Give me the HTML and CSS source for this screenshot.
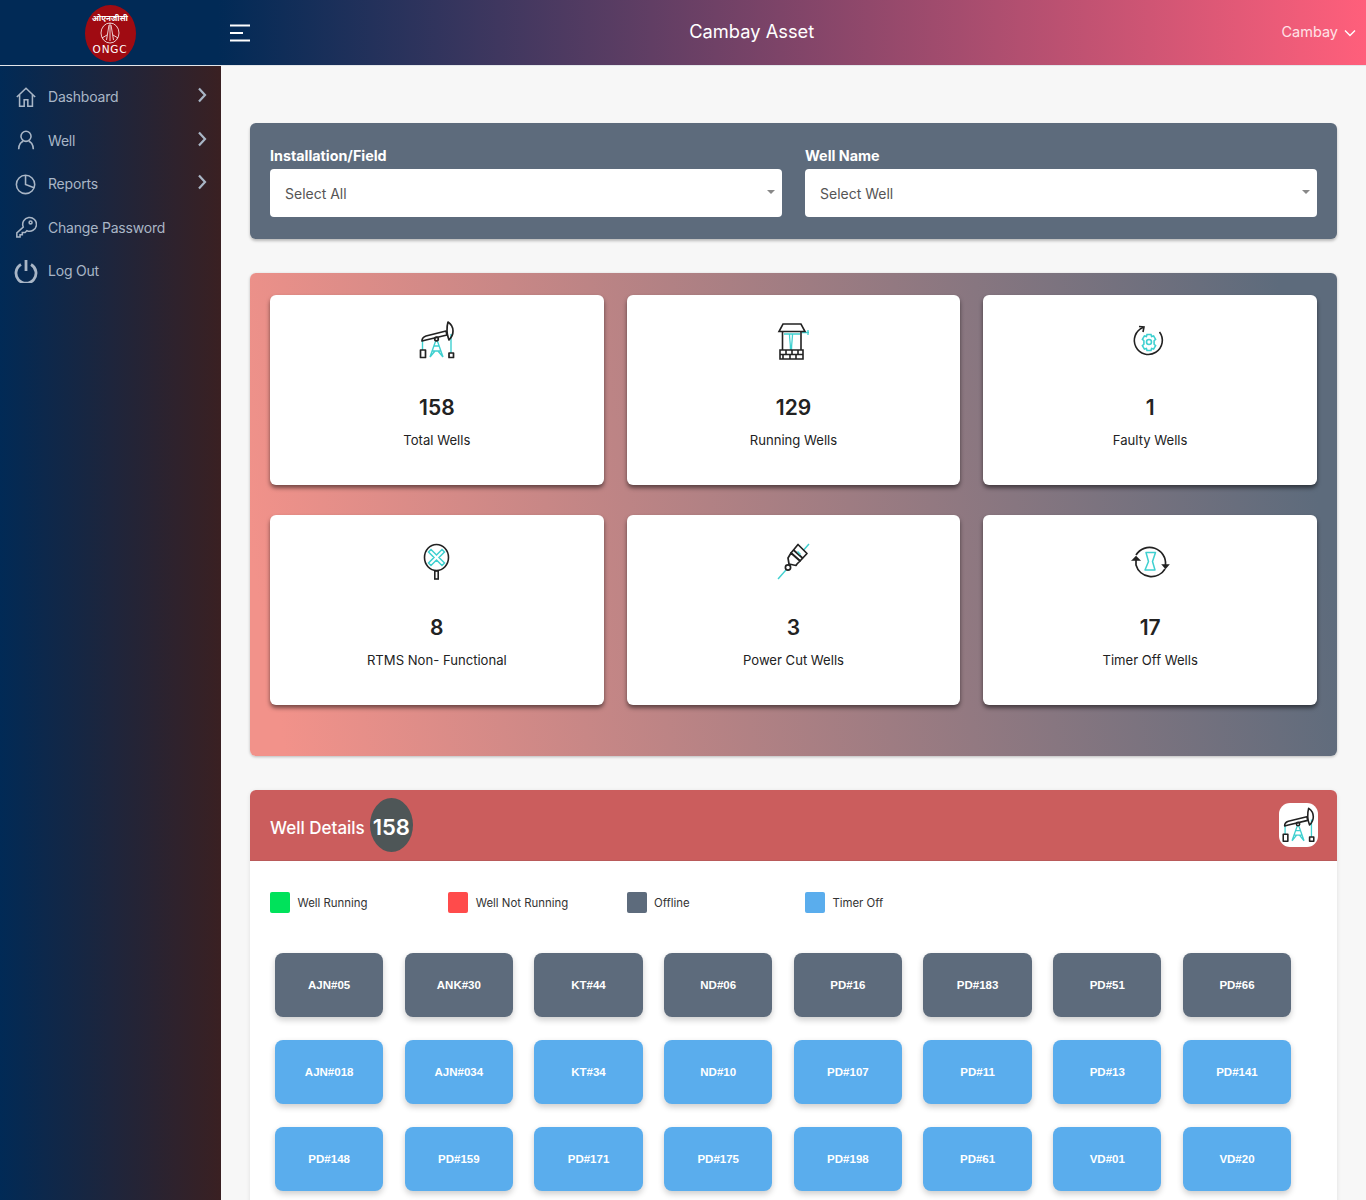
FILE: index.html
```html
<!DOCTYPE html>
<html lang="en">
<head>
<meta charset="utf-8">
<title>Cambay Asset</title>
<link rel="stylesheet" href="styles.css">
</head>
<body>
<svg class="defs" width="0" height="0" aria-hidden="true">
  <symbol id="pump" viewBox="0 0 40 40">
    <g fill="none" stroke="#3fd0d0" stroke-width="1.4">
      <path d="M5.5 20v10M34 14v19M19 20l-6 17M20 20l6 17M15.5 31h8M17 26h5M13 37l5-6 3 0 5 6"/>
    </g>
    <g fill="none" stroke="#222" stroke-width="1.7" stroke-linejoin="round">
      <path d="M5 21c0-3 1-4 4-5l20-5 1 4-21 5-4 1z"/>
      <path d="M31 2c3 2 5 6 5 9 0 4-2 7-4 9-1-3-2-5-2-9 0-4 0-6 1-9z"/>
      <rect x="3.5" y="30" width="5" height="7.5"/>
      <rect x="32" y="33" width="4.5" height="4.5"/>
      <circle cx="19.5" cy="19" r="1.8"/>
    </g>
  </symbol>
</svg>

<header class="topbar">
  <div class="brand">
    <div class="logo">
      <span class="logo-hi">ओएनजीसी</span>
      <svg class="logo-mark" viewBox="0 0 20 22" aria-hidden="true">
        <g fill="none" stroke="#fff" stroke-width=".8">
          <ellipse cx="10" cy="11" rx="9" ry="10"/>
          <path d="M10 1v18M9 3 6.500 18M11 3l2.500 15M2 16l5-3M18 16l-5-3"/>
        </g>
      </svg>
      <span class="logo-en">ONGC</span>
    </div>
  </div>
  <div class="topbar-main">
    <svg class="burger" viewBox="0 0 22 18" aria-hidden="true">
      <path d="M1 1.500h20M1 9h13M1 16.500h20" stroke="#fff" stroke-width="1.800" fill="none"/>
    </svg>
    <h1 class="asset">Cambay Asset</h1>
    <div class="user">
      <span>Cambay</span>
      <svg class="caret" viewBox="0 0 12 8" aria-hidden="true"><path d="M1 1.500l5 5 5-5" fill="none" stroke="#fff" stroke-width="1.400"/></svg>
    </div>
  </div>
</header>

<div class="shell">
  <nav class="sidebar">
    <a class="nav-item">
      <svg class="nav-ico" viewBox="0 0 24 24"><path d="M2 12 12 2.500 22 12M5 9.500V22h5v-7h4v7h5V9.500"/></svg>
      <span class="nav-text">Dashboard</span>
      <svg class="chev" viewBox="0 0 10 16"><path d="M2 1.500 8 8l-6 6.500"/></svg>
    </a>
    <a class="nav-item">
      <svg class="nav-ico" viewBox="0 0 24 24"><circle cx="12" cy="8" r="5.500"/><path d="M4 22c0-5 3-8.500 5-8.500M20 22c0-5-3-8.500-5-8.500"/></svg>
      <span class="nav-text">Well</span>
      <svg class="chev" viewBox="0 0 10 16"><path d="M2 1.500 8 8l-6 6.500"/></svg>
    </a>
    <a class="nav-item">
      <svg class="nav-ico" viewBox="0 0 24 24"><circle cx="11.500" cy="12.500" r="10"/><path d="M11.500 2.500v10l9.300 3.500"/></svg>
      <span class="nav-text">Reports</span>
      <svg class="chev" viewBox="0 0 10 16"><path d="M2 1.500 8 8l-6 6.500"/></svg>
    </a>
    <a class="nav-item">
      <svg class="nav-ico" viewBox="0 0 24 24"><path d="M9 12a7.500 7.500 0 1 1 4 4l-2 2h-3v2.500H5.500V23H2v-4.500z"/><circle cx="17" cy="7" r="1.600"/></svg>
      <span class="nav-text">Change Password</span>
    </a>
    <a class="nav-item">
      <svg class="nav-ico power" viewBox="0 0 24 24"><path d="M7 5.500a10 10 0 1 0 10 0M12 1v11"/></svg>
      <span class="nav-text">Log Out</span>
    </a>
  </nav>

  <main class="content">
    <section class="filters">
      <label class="field">
        <span class="field-label">Installation/Field</span>
        <span class="select">Select All</span>
      </label>
      <label class="field">
        <span class="field-label">Well Name</span>
        <span class="select">Select Well</span>
      </label>
    </section>

    <section class="stats">
      <article class="stat">
        <svg class="stat-ico" viewBox="0 0 40 40"><use href="#pump"/></svg>
        <div class="stat-num">158</div>
        <div class="stat-label">Total Wells</div>
      </article>
      <article class="stat">
        <svg class="stat-ico" viewBox="0 0 40 40">
          <g fill="none" stroke="#3fd0d0" stroke-width="1.300"><path d="M11 14h16M16.500 14c0 6 1 8 1 16M19.500 14c0 6-1 8-1 16M29 12.500h7M35 10v5"/></g>
          <g fill="none" stroke="#222" stroke-width="1.600"><path d="M10 4h18l4 7.500H6zM6 11.500h26M9.500 12v18M28 12v18M7 30h23v9H7zM7 34.500h23M13 30v4.500M19 30v4.500M25 30v4.500M10 34.500V39M17 34.500V39M23 34.500V39"/></g>
        </svg>
        <div class="stat-num">129</div>
        <div class="stat-label">Running Wells</div>
      </article>
      <article class="stat">
        <svg class="stat-ico" viewBox="0 0 40 40">
          <g fill="none" stroke="#222" stroke-width="1.600"><path d="M13 7.500A14 14 0 1 0 29.500 12"/><path d="M9 6.500l5 .5-1 5"/></g>
          <g fill="none" stroke="#3fd0d0" stroke-width="1.600"><circle cx="19" cy="22" r="2.500"/><path d="M17 14.500h4l.6 2 2-.6 2 3.400-1.500 1.500v3.400l1.500 1.500-2 3.400-2-.6-.6 2h-4l-.6-2-2 .6-2-3.400 1.500-1.500v-3.400l-1.500-1.500 2-3.400 2 .6z"/></g>
        </svg>
        <div class="stat-num">1</div>
        <div class="stat-label">Faulty Wells</div>
      </article>
      <article class="stat">
        <svg class="stat-ico" viewBox="0 0 40 40">
          <path d="M-8-5.500-5.500-8 0-2.500 5.500-8 8-5.500 2.500 0 8 5.500 5.500 8 0 2.500-5.500 8-8 5.500-2.500 0z" transform="translate(19.500 17.500)" fill="none" stroke="#3fd0d0" stroke-width="1.500"/>
          <g fill="none" stroke="#222" stroke-width="1.600"><ellipse cx="19.500" cy="17.500" rx="12" ry="13"/><rect x="17.800" y="31" width="3.400" height="8"/></g>
        </svg>
        <div class="stat-num">8</div>
        <div class="stat-label">RTMS Non- Functional</div>
      </article>
      <article class="stat">
        <svg class="stat-ico" viewBox="0 0 40 40">
          <path d="M5 39 36 4" fill="none" stroke="#3fd0d0" stroke-width="1.400"/>
          <g fill="#fff" stroke="#222" stroke-width="1.700" stroke-linejoin="round"><path d="M18 13l7-8.500 9 9-7 7.500z"/><path d="M18 13l9 8-3 3-1 1.500-7-1.500-1-6z"/><path d="M20.500 10l9.500 8.500"/><circle cx="15" cy="27.500" r="2.600"/></g>
          <path d="M24.500 11.500l3 3" fill="none" stroke="#3fd0d0" stroke-width="1.400"/>
        </svg>
        <div class="stat-num">3</div>
        <div class="stat-label">Power Cut Wells</div>
      </article>
      <article class="stat">
        <svg class="stat-ico" viewBox="0 0 40 40">
          <g fill="none" stroke="#222" stroke-width="1.700"><path d="M6 15A16 16 0 0 1 35.500 25"/><path d="M33 25l2.500 3 2.500-3z" fill="#222"/><path d="M35 29A16 16 0 0 1 6 25V20"/><path d="M3 20l3-3 3 3z" fill="#222"/></g>
          <path d="M16 12.500h9.500l-3 9 2.500 8.500-10 0 3.500-8.500z" fill="none" stroke="#3fd0d0" stroke-width="1.500" stroke-linejoin="round"/>
        </svg>
        <div class="stat-num">17</div>
        <div class="stat-label">Timer Off Wells</div>
      </article>
    </section>

    <section class="details">
      <div class="details-head">
        <div class="details-title">
          <span class="details-name">Well Details</span>
          <span class="count">158</span>
        </div>
        <div class="head-ico"><svg viewBox="0 0 40 40"><use href="#pump"/></svg></div>
      </div>
      <div class="details-body">
        <ul class="legend">
          <li class="legend-item"><i class="dot dot-green"></i>Well Running</li>
          <li class="legend-item"><i class="dot dot-red"></i>Well Not Running</li>
          <li class="legend-item"><i class="dot dot-slate"></i>Offline</li>
          <li class="legend-item"><i class="dot dot-blue"></i>Timer Off</li>
        </ul>
        <div class="wells">
          <a class="well slate">AJN#05</a><a class="well slate">ANK#30</a><a class="well slate">KT#44</a><a class="well slate">ND#06</a><a class="well slate">PD#16</a><a class="well slate">PD#183</a><a class="well slate">PD#51</a><a class="well slate">PD#66</a>
          <a class="well blue">AJN#018</a><a class="well blue">AJN#034</a><a class="well blue">KT#34</a><a class="well blue">ND#10</a><a class="well blue">PD#107</a><a class="well blue">PD#11</a><a class="well blue">PD#13</a><a class="well blue">PD#141</a>
          <a class="well blue">PD#148</a><a class="well blue">PD#159</a><a class="well blue">PD#171</a><a class="well blue">PD#175</a><a class="well blue">PD#198</a><a class="well blue">PD#61</a><a class="well blue">VD#01</a><a class="well blue">VD#20</a>
        </div>
      </div>
    </section>
  </main>
</div>
</body>
</html>
```

FILE: styles.css
```css
* { box-sizing: border-box; }
html, body { margin: 0; height: 1200px; overflow: hidden; }
body { font-family: Inter, "Noto Sans", sans-serif; background: #f7f7f7; color: #333; }
.defs { display: block; height: 0; }

.topbar {
  display: flex; height: 66px;
  background: linear-gradient(90deg, #012a56 0, #012a56 16%, #ff5f7b 100%);
  border-bottom: 1px solid #e3e6ea;
}
.brand { width: 220px; flex: none; display: flex; justify-content: center; align-items: center; }
.logo {
  width: 51px; height: 57px; border-radius: 50%; background: #a00b12; margin-top: 2px;
  display: flex; flex-direction: column; align-items: center; justify-content: center; color: #fff;
}
.logo-hi { font: 700 8px/9px "Noto Sans", sans-serif; }
.logo-mark { width: 20px; height: 22px; }
.logo-en { font: 400 10.500px/11px "DejaVu Sans", sans-serif; letter-spacing: .8px; }
.topbar-main { flex: 1; display: flex; align-items: center; padding: 0 10px 0 9px; }
.burger { width: 22px; height: 18px; flex: none; }
.asset {
  flex: 1; margin: 0 0 4px; text-align: center; color: #fff; font-size: 18.300px; font-weight: 400; padding-right: 29px;
}
.user { display: flex; align-items: center; gap: 6px; color: #ffe3e8; font-size: 14.500px; margin-top: -3px; }
.caret { width: 12px; height: 8px; margin-top: 3px; }

.shell { display: flex; height: 1134px; }
.sidebar {
  width: 221px; flex: none; padding-top: 9px;
  background: linear-gradient(90deg, #012a56 0, #3a2022 100%);
}
.nav-item { display: flex; align-items: center; height: 43.500px; padding: 0 14px 0 15px; color: #a9b6c6; font-size: 14px; letter-spacing: -.2px; }
.nav-text { flex: 1; margin-left: 11px; }
.nav-ico { width: 22px; height: 22px; flex: none; fill: none; stroke: #a9b6c6; stroke-width: 1.700; }
.nav-ico.power { width: 24px; height: 24px; margin: 0 -1px; stroke-width: 2.800; }
.chev { width: 10px; height: 16px; fill: none; stroke: #a9b6c6; stroke-width: 2.200; margin-top: -3px; }

.content { flex: 1; padding: 57px 29px 0 29px; }
.filters {
  display: grid; grid-template-columns: 1fr 1fr; column-gap: 23px;
  height: 116px; padding: 24px 20px 0 20px; border-radius: 6px; background: #5d6b7c;
  box-shadow: 0 2px 3px rgba(0,0,0,.25);
}
.field { display: flex; flex-direction: column; }
.field-label { color: #fff; font-weight: 700; font-size: 14.300px; line-height: 18px; margin-bottom: 4px; }
.select {
  position: relative; display: flex; align-items: center; height: 48px; padding: 0 15px;
  background: #fff; border-radius: 4px; color: #555; font-size: 14px;
}
.select::after {
  content: ""; position: absolute; right: 7px; top: 21px;
  border: 4px solid transparent; border-top: 4px solid #888; border-bottom: 0;
}

.stats {
  display: grid; grid-template-columns: repeat(3, 1fr); column-gap: 23px; row-gap: 30px;
  height: 483px; margin-top: 34px; padding: 22px 20px 0 20px; border-radius: 6px; align-content: start;
  background: linear-gradient(80deg, #f2928a 3%, #5d6b7c 95%);
  box-shadow: 0 1px 3px rgba(0,0,0,.25);
}
.stat {
  height: 190px; background: #fff; border-radius: 6px; padding-top: 25px; text-align: center; color: #222;
  box-shadow: 0 3px 4px rgba(0,0,0,.5);
}
.stat-ico { display: block; width: 40px; height: 40px; margin: 0 auto; }
.stat-num { margin-top: 34px; font-size: 21px; font-weight: 600; line-height: 28px; }
.stat-label { margin-top: 8px; font-size: 13.100px; line-height: 20px; }

.details { margin-top: 34px; background: #fff; border-radius: 6px 6px 0 0; height: 500px; box-shadow: 0 1px 4px rgba(0,0,0,.1); }
.details-head {
  display: flex; align-items: center; justify-content: space-between; height: 71px; padding: 0 19px 0 20px;
  background: #cb5d5d; border-radius: 6px 6px 0 0; border-bottom: 1px solid #b95a5a;
}
.details-title { display: flex; align-items: center; gap: 5px; color: #fff; font-size: 17px; }
.details-name { margin-top: 6px; font-weight: 500; }
.count {
  display: flex; align-items: center; justify-content: center; width: 43px; height: 54px; margin-top: -1px; padding-top: 4px;
  border-radius: 50%; background: #4e5657; font-size: 22px; font-weight: 600;
}
.head-ico { width: 39px; height: 44px; background: #fff; border-radius: 11px; padding: 2px 1px; }
.head-ico svg { display: block; width: 37px; height: 40px; }

.details-body { padding: 31px 20px 0 20px; }
.legend { display: flex; list-style: none; margin: 0; padding: 0; }
.legend-item { width: 178.300px; display: flex; align-items: center; gap: 7.500px; font-size: 11.400px; color: #333; }
.dot { width: 20px; height: 21px; border-radius: 2px; }
.dot-green { background: #00e25b; }
.dot-red { background: #ff4b4b; }
.dot-slate { background: #5d6b7c; }
.dot-blue { background: #5aaded; }

.wells {
  display: grid; grid-template-columns: repeat(8, 108.300px); column-gap: 21.400px; row-gap: 23px;
  margin-top: 40px; padding-left: 5px;
}
.well {
  display: flex; align-items: center; justify-content: center; height: 64px; padding-bottom: 1px; border-radius: 8px;
  color: #fff; font: 700 11.500px "Liberation Sans", sans-serif;
  box-shadow: 0 3px 6px rgba(0,0,0,.2);
}
.well.slate { background: #5d6b7c; }
.well.blue { background: #5aaded; }
```
